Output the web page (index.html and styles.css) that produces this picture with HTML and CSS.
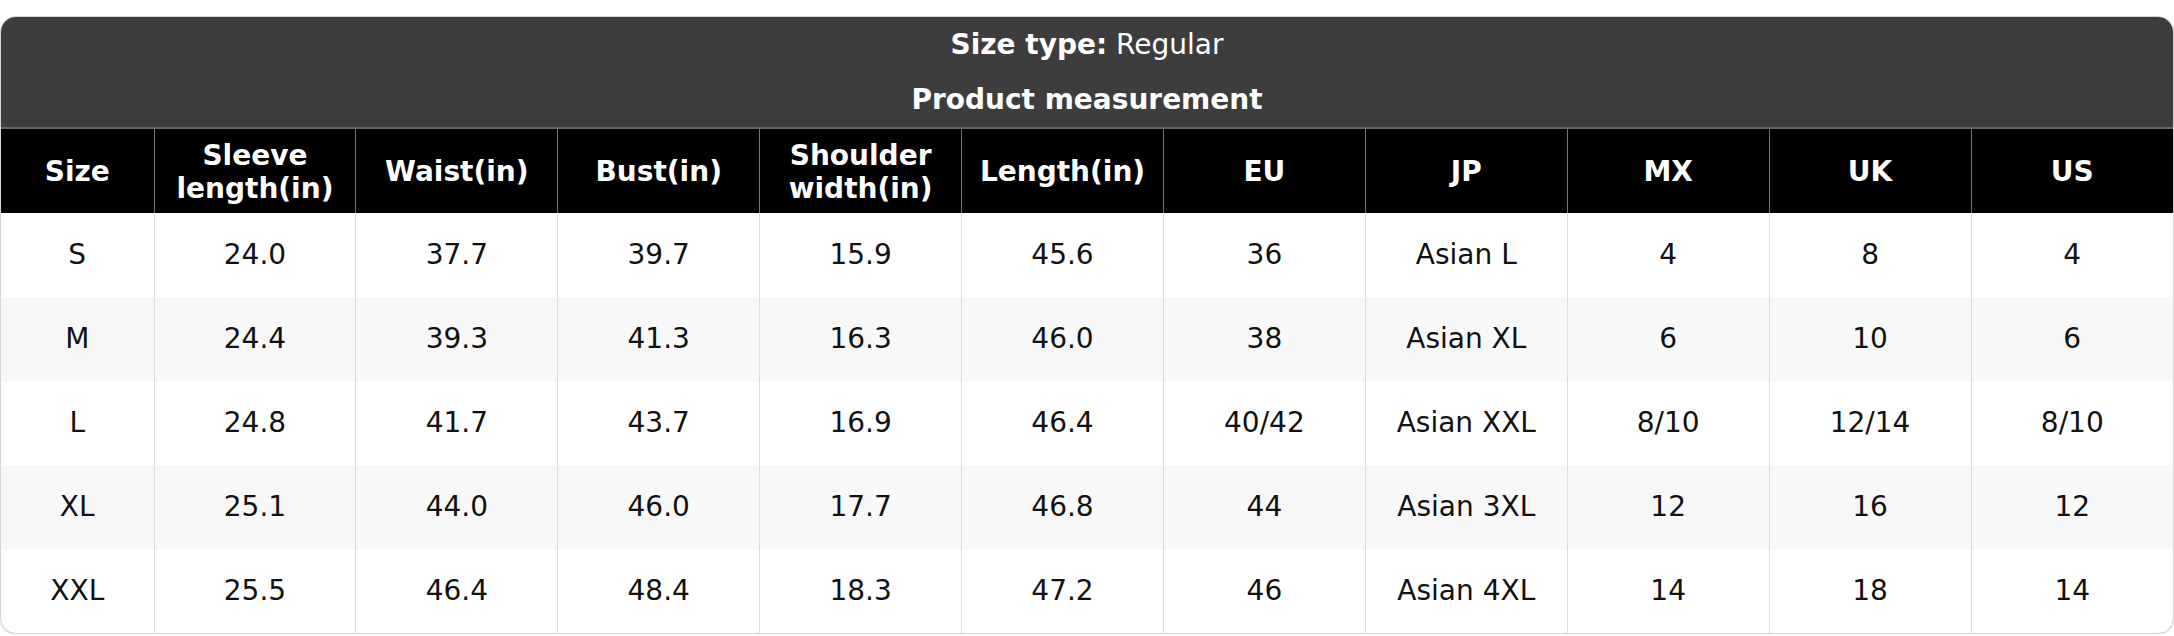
FILE: index.html
```html
<!DOCTYPE html>
<html>
<head>
<meta charset="utf-8">
<link rel="stylesheet" href="styles.css">
</head>
<body>
<div class="chart">
  <div class="title">
    <div class="title-line"><span class="strong">Size type:</span> Regular</div>
    <div class="title-line strong">Product measurement</div>
  </div>
  <table class="grid">
    <colgroup>
      <col class="col-first">
      <col><col><col><col><col><col><col><col><col><col>
    </colgroup>
    <thead>
      <tr>
        <th>Size</th>
        <th>Sleeve<br>length(in)</th>
        <th>Waist(in)</th>
        <th>Bust(in)</th>
        <th>Shoulder<br>width(in)</th>
        <th>Length(in)</th>
        <th>EU</th>
        <th>JP</th>
        <th>MX</th>
        <th>UK</th>
        <th>US</th>
      </tr>
    </thead>
    <tbody>
      <tr><td>S</td><td>24.0</td><td>37.7</td><td>39.7</td><td>15.9</td><td>45.6</td><td>36</td><td>Asian L</td><td>4</td><td>8</td><td>4</td></tr>
      <tr><td>M</td><td>24.4</td><td>39.3</td><td>41.3</td><td>16.3</td><td>46.0</td><td>38</td><td>Asian XL</td><td>6</td><td>10</td><td>6</td></tr>
      <tr><td>L</td><td>24.8</td><td>41.7</td><td>43.7</td><td>16.9</td><td>46.4</td><td>40/42</td><td>Asian XXL</td><td>8/10</td><td>12/14</td><td>8/10</td></tr>
      <tr><td>XL</td><td>25.1</td><td>44.0</td><td>46.0</td><td>17.7</td><td>46.8</td><td>44</td><td>Asian 3XL</td><td>12</td><td>16</td><td>12</td></tr>
      <tr><td>XXL</td><td>25.5</td><td>46.4</td><td>48.4</td><td>18.3</td><td>47.2</td><td>46</td><td>Asian 4XL</td><td>14</td><td>18</td><td>14</td></tr>
    </tbody>
  </table>
</div>
</body>
</html>
```
FILE: styles.css
```css
html, body {
  margin: 0;
  padding: 0;
  background: #ffffff;
}
body {
  padding-top: 16px;
  font-family: "DejaVu Sans", "Liberation Sans", sans-serif;
  font-size: 28px;
  color: #111111;
}
.chart {
  border: 1px solid #d4d4d4;
  border-radius: 16px;
  overflow: hidden;
  background: #ffffff;
  box-shadow: 0 1px 2px rgba(0,0,0,0.12);
}
.title {
  background: #3d3d3d;
  color: #ffffff;
  text-align: center;
  padding: 0;
}
.title-line {
  line-height: 33px;
  padding: 11px 0;
  height: 33px;
}
.strong {
  font-weight: bold;
}
.grid {
  width: 100%;
  border-collapse: collapse;
  table-layout: fixed;
}
.col-first {
  width: 153px;
}
.grid th {
  background: #000000;
  color: #ffffff;
  font-weight: bold;
  line-height: 33px;
  padding: 9px 4px 8px;
  height: 67px;
  border-top: 2px solid #666666;
  border-left: 1px solid #777777;
  border-right: 1px solid #777777;
  text-align: center;
  vertical-align: middle;
}
.grid td {
  text-align: center;
  vertical-align: middle;
  line-height: 34px;
  padding: 25px 4px;
  border-left: 1px solid #dcdcdc;
  border-right: 1px solid #dcdcdc;
}
.grid th:first-child,
.grid td:first-child {
  border-left: none;
}
.grid th:last-child,
.grid td:last-child {
  border-right: none;
}
.grid tbody tr:nth-child(even) td {
  background: #f8f8f8;
}
```
